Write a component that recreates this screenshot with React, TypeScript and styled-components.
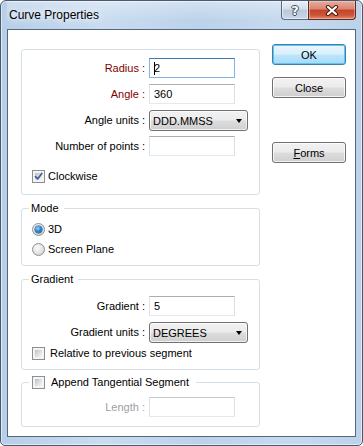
import styled, { createGlobalStyle } from "styled-components";

const GlobalStyle = createGlobalStyle`
  html, body {
    margin: 0;
    padding: 0;
    background: #ffffff;
  }
  body {
    font-family: "Liberation Sans", Arial, sans-serif;
    font-size: 11px;
    color: #000000;
  }
`;

const Window = styled.div`
  width: 363px;
  height: 446px;
  box-sizing: border-box;
  border: 1px solid #4a5a6e;
  border-radius: 6px 6px 5px 5px;
  background: linear-gradient(
    90deg,
    #b6cee8 0%,
    #c9dcf0 28%,
    #bcd2ea 55%,
    #c6daef 80%,
    #bcd2ea 100%
  );
  box-shadow: inset 0 0 0 1px rgba(255, 255, 255, 0.55);
  display: flex;
  flex-direction: column;
  padding: 0 6px 8px 6px;
  overflow: hidden;
`;

const TitleBar = styled.div`
  height: 28px;
  flex-shrink: 0;
  display: flex;
  align-items: center;
  justify-content: space-between;
  background: linear-gradient(
    180deg,
    rgba(255, 255, 255, 0.35) 0%,
    rgba(255, 255, 255, 0) 70%
  );
`;

const Title = styled.span`
  margin-left: 2px;
  font-size: 12px;
  color: #000000;
  text-shadow: 0 0 6px #ffffff, 0 0 10px #ffffff;
`;

const CaptionButtons = styled.div`
  align-self: flex-start;
  display: flex;
`;

const HelpButton = styled.div`
  width: 27px;
  height: 19px;
  box-sizing: border-box;
  border: 1px solid #56697f;
  border-top: none;
  border-right: none;
  border-radius: 0 0 0 4px;
  background: linear-gradient(
    180deg,
    #e9f0f7 0%,
    #d4dfeb 45%,
    #b9c9db 50%,
    #cad8e7 100%
  );
  box-shadow: inset 0 0 0 1px rgba(255, 255, 255, 0.5);
  display: flex;
  align-items: center;
  justify-content: center;
  font-family: "DejaVu Sans", sans-serif;
  font-weight: bold;
  font-size: 13px;
  color: #ffffff;
  text-shadow: 1px 0 0 #3b4a5c, -1px 0 0 #3b4a5c, 0 1px 0 #3b4a5c,
    0 -1px 0 #3b4a5c;
`;

const CloseButton = styled.div`
  width: 48px;
  height: 19px;
  box-sizing: border-box;
  border: 1px solid #5e2a20;
  border-top: none;
  border-radius: 0 0 4px 0;
  background: linear-gradient(
    180deg,
    #e9ab9c 0%,
    #d98570 45%,
    #c4432a 50%,
    #cc5436 78%,
    #e08c6c 100%
  );
  box-shadow: inset 0 0 0 1px rgba(255, 220, 210, 0.45);
  display: flex;
  align-items: center;
  justify-content: center;
`;

const Client = styled.div`
  flex: 1;
  border: 1px solid #56677c;
  background: #ffffff;
  display: flex;
  align-items: flex-start;
  padding: 14px 9px 0 13px;
`;

const LeftColumn = styled.div`
  width: 239px;
  padding-top: 5px;
  display: flex;
  flex-direction: column;
`;

const ButtonColumn = styled.div`
  margin-left: 12px;
  display: flex;
  flex-direction: column;
  gap: 12px;
`;

interface GroupProps {
  $gap?: number;
  $top: number;
  $bottom: number;
}

const Group = styled.fieldset<GroupProps>`
  margin: ${({ $gap }) => $gap ?? 0}px 0 0 0;
  padding: ${({ $top }) => $top}px 0 ${({ $bottom }) => $bottom}px 0;
  border: 1px solid #d5dfe5;
  border-radius: 3px;
  min-width: 0;
`;

interface LegendProps {
  $left?: number;
  $right?: number;
}

const Legend = styled.legend<LegendProps>`
  margin-left: 7px;
  padding: 0 ${({ $right }) => $right ?? 5}px 0 ${({ $left }) => $left ?? 2}px;
  line-height: 14px;
  height: 14px;
  display: flex;
  align-items: center;
`;

const FieldGrid = styled.div`
  display: grid;
  grid-template-columns: 123px auto;
  grid-auto-rows: 20px;
  column-gap: 4px;
  row-gap: 6px;
  align-items: center;
  justify-content: start;
`;

interface FieldLabelProps {
  $tone?: "accent" | "disabled";
}

const FieldLabel = styled.span<FieldLabelProps>`
  text-align: right;
  white-space: nowrap;
  color: ${({ $tone }) =>
    $tone === "accent" ? "#800000" : $tone === "disabled" ? "#a0a0a0" : "#000000"};
`;

interface TextBoxProps {
  $focused?: boolean;
  $disabled?: boolean;
}

const TextBox = styled.div<TextBoxProps>`
  width: 86px;
  height: 20px;
  box-sizing: border-box;
  border: 1px solid;
  border-color: ${({ $focused, $disabled }) =>
    $focused
      ? "#3d7bad #7eb4ea #7eb4ea #7eb4ea"
      : $disabled
      ? "#c6c8cc #dfe1e5 #e6e8ea #dfe1e5"
      : "#abadb3 #dbdfe6 #e3e9ef #e2e3ea"};
  background: #ffffff;
  padding: 0 3px 0 4px;
  display: flex;
  align-items: center;
  color: #000000;
`;

const Caret = styled.span`
  width: 1px;
  height: 13px;
  background: #000000;
  margin-right: -1px;
`;

const Combo = styled.div`
  width: 99px;
  height: 21px;
  align-self: start;
  box-sizing: border-box;
  border: 1px solid #707070;
  border-radius: 3px;
  background: linear-gradient(
    180deg,
    #f2f2f2 0%,
    #ebebeb 48%,
    #dddddd 52%,
    #cfcfcf 100%
  );
  box-shadow: inset 0 0 0 1px rgba(255, 255, 255, 0.7);
  display: flex;
  align-items: center;
  justify-content: space-between;
  padding: 1px 5px 0 3px;
`;

const ComboArrow = styled.span`
  width: 0;
  height: 0;
  border-left: 3.5px solid transparent;
  border-right: 3.5px solid transparent;
  border-top: 4px solid #000000;
`;

interface CheckRowProps {
  $gap?: number;
  $inset?: number;
  $height?: number;
}

const CheckRow = styled.label<CheckRowProps>`
  display: flex;
  align-items: center;
  gap: ${({ $gap }) => $gap ?? 4}px;
  padding-left: ${({ $inset }) => $inset ?? 10}px;
  height: ${({ $height }) => $height ?? 16}px;
  white-space: nowrap;
`;

const CheckBox = styled.span`
  position: relative;
  width: 13px;
  height: 13px;
  box-sizing: border-box;
  flex-shrink: 0;
  border: 1px solid #8e8f8f;
  background: #f4f4f4;
  &::before {
    content: "";
    position: absolute;
    inset: 2px;
    background: linear-gradient(135deg, #b9bec5 0%, #dfe1e4 55%, #f5f5f6 100%);
  }
  svg {
    position: absolute;
    left: 0;
    top: 0;
  }
`;

const Radio = styled.span<{ $on?: boolean }>`
  position: relative;
  width: 13px;
  height: 13px;
  box-sizing: border-box;
  flex-shrink: 0;
  border-radius: 50%;
  border: 1px solid #8e8f8f;
  background: radial-gradient(
    circle at 40% 35%,
    #fbfbfb 0%,
    #e6e7e8 45%,
    #c8cbcf 100%
  );
  &::after {
    content: "";
    display: ${({ $on }) => ($on ? "block" : "none")};
    position: absolute;
    left: 2px;
    top: 2px;
    width: 7px;
    height: 7px;
    border-radius: 50%;
    background: radial-gradient(
      circle at 40% 35%,
      #9fd4f7 0%,
      #2b86d0 45%,
      #0e4f94 100%
    );
    box-shadow: 0 0 0 0.5px #1b4f86;
  }
`;

const RadioRow = styled.label`
  display: flex;
  align-items: center;
  gap: 3px;
  padding-left: 10px;
  height: 20px;
`;

const Button = styled.div<{ $default?: boolean; $gap?: number }>`
  width: 74px;
  height: 21px;
  margin-top: ${({ $gap }) => $gap ?? 0}px;
  box-sizing: border-box;
  border: 1px solid ${({ $default }) => ($default ? "#3c7fb1" : "#707070")};
  border-radius: 3px;
  background: ${({ $default }) =>
    $default
      ? "linear-gradient(180deg, #eaf6fd 0%, #d9f0fc 48%, #bee6fd 52%, #a7d9f5 100%)"
      : "linear-gradient(180deg, #f2f2f2 0%, #ebebeb 48%, #dddddd 52%, #cfcfcf 100%)"};
  box-shadow: inset 0 0 0 1px
    ${({ $default }) => ($default ? "#62c4f0" : "rgba(255, 255, 255, 0.75)")};
  display: flex;
  align-items: center;
  justify-content: center;
  color: #000000;
`;

const CheckMark = () => (
  <svg width="11" height="11" viewBox="0 0 11 11">
    <path
      d="M2.5 5.6 L4.6 7.9 L8.8 2.4"
      fill="none"
      stroke="#3e5e9e"
      strokeWidth="1.7"
      strokeLinecap="round"
      strokeLinejoin="round"
    />
  </svg>
);

const CloseGlyph = () => (
  <svg width="14" height="11" viewBox="0 0 14 11">
    <path
      d="M3 2 L11 9 M11 2 L3 9"
      stroke="#4a1a12"
      strokeWidth="4.2"
      strokeLinecap="round"
    />
    <path
      d="M3 2 L11 9 M11 2 L3 9"
      stroke="#ffffff"
      strokeWidth="2.2"
      strokeLinecap="round"
    />
  </svg>
);

const App = () => {
  return (
    <>
      <GlobalStyle />
      <Window>
        <TitleBar>
          <Title>Curve Properties</Title>
          <CaptionButtons>
            <HelpButton>?</HelpButton>
            <CloseButton>
              <CloseGlyph />
            </CloseButton>
          </CaptionButtons>
        </TitleBar>

        <Client>
          <LeftColumn>
            <Group $top={8} $bottom={10}>
              <FieldGrid>
                <FieldLabel $tone="accent">Radius :</FieldLabel>
                <TextBox $focused>
                  <Caret />
                  2
                </TextBox>
                <FieldLabel $tone="accent">Angle :</FieldLabel>
                <TextBox>360</TextBox>
                <FieldLabel>Angle units :</FieldLabel>
                <Combo>
                  DDD.MMSS
                  <ComboArrow />
                </Combo>
                <FieldLabel>Number of points :</FieldLabel>
                <TextBox />
              </FieldGrid>
              <CheckRow $gap={3} style={{ marginTop: 12 }}>
                <CheckBox>
                  <CheckMark />
                </CheckBox>
                Clockwise
              </CheckRow>
            </Group>

            <Group $gap={6} $top={4} $bottom={6}>
              <Legend>Mode</Legend>
              <RadioRow>
                <Radio $on />
                3D
              </RadioRow>
              <RadioRow>
                <Radio />
                Screen Plane
              </RadioRow>
            </Group>

            <Group $gap={6} $top={10} $bottom={8}>
              <Legend>Gradient</Legend>
              <FieldGrid>
                <FieldLabel>Gradient :</FieldLabel>
                <TextBox>5</TextBox>
                <FieldLabel>Gradient units :</FieldLabel>
                <Combo>
                  DEGREES
                  <ComboArrow />
                </Combo>
              </FieldGrid>
              <CheckRow $gap={5} style={{ marginTop: 3 }}>
                <CheckBox />
                Relative to previous segment
              </CheckRow>
            </Group>

            <Group $gap={5} $top={8} $bottom={9}>
              <Legend $left={3} $right={7}>
                <CheckRow $gap={6} $inset={0} $height={14}>
                  <CheckBox />
                  Append Tangential Segment
                </CheckRow>
              </Legend>
              <FieldGrid>
                <FieldLabel $tone="disabled">Length :</FieldLabel>
                <TextBox $disabled />
              </FieldGrid>
            </Group>
          </LeftColumn>

          <ButtonColumn>
            <Button $default>OK</Button>
            <Button>Close</Button>
            <Button $gap={32}>
              <u>F</u>orms
            </Button>
          </ButtonColumn>
        </Client>
      </Window>
    </>
  );
};

export default App;
